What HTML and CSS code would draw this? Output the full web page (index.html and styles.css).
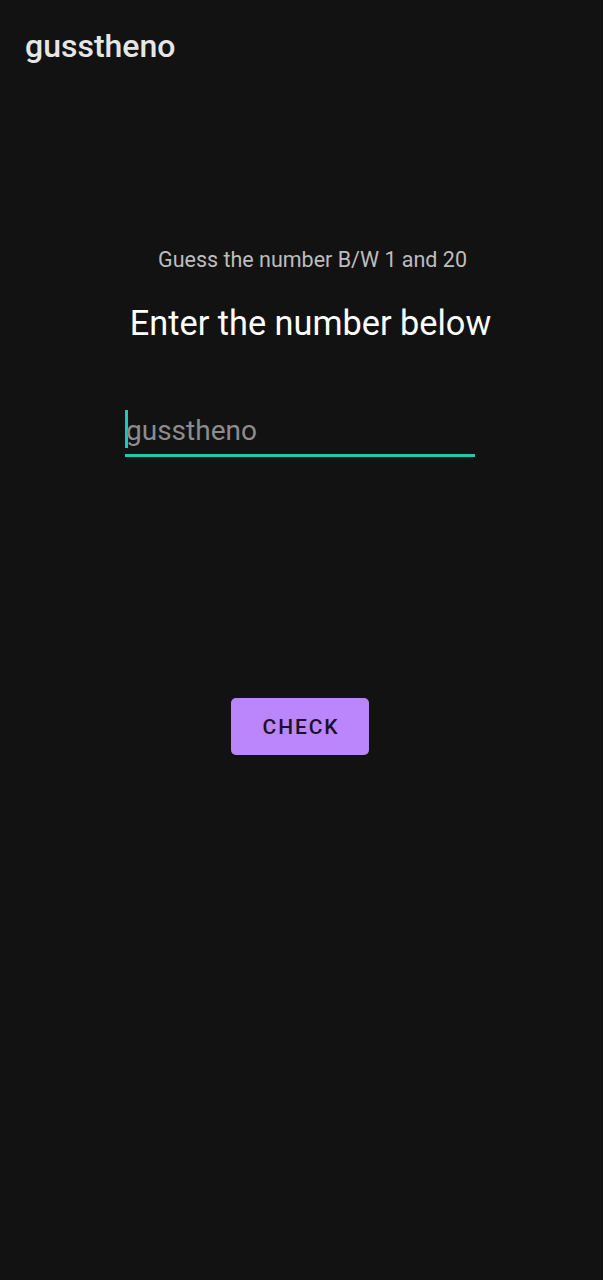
FILE: index.html
```html
<!DOCTYPE html>
<html lang="en">
<head>
<meta charset="utf-8">
<title>gusstheno</title>
<link rel="stylesheet" href="styles.css">
</head>
<body>
<div class="app">
  <header class="appbar"><span class="app-title">gusstheno</span></header>
  <main class="content">
    <p class="hint">Guess the number B/W 1 and 20</p>
    <h1 class="heading">Enter the number below</h1>
    <div class="field">
      <span class="cursor"></span><span class="placeholder">gusstheno</span>
    </div>
    <button class="check">CHECK</button>
  </main>
</div>
</body>
</html>
```
FILE: styles.css
```css
html, body {
  margin: 0;
  padding: 0;
  background: #121212;
}
body {
  font-family: Roboto, "Noto Sans", sans-serif;
  width: 603px;
  height: 1280px;
  overflow: hidden;
}
.app {
  display: flex;
  flex-direction: column;
}
.appbar {
  height: 92px;
  padding: 24px 0 0 25px;
  box-sizing: border-box;
}
.app-title {
  font-size: 32px;
  font-weight: 500;
  color: #e6e6e6;
  line-height: 44px;
  display: block;
}
.content {
  display: flex;
  flex-direction: column;
  align-items: center;
  padding-top: 155px;
}
.hint {
  margin: 0 0 0 22px;
  font-size: 21.5px;
  line-height: 26px;
  color: #bdbdbd;
}
.heading {
  margin: 30px 0 0 18px;
  font-size: 34.3px;
  font-weight: 400;
  line-height: 40px;
  color: #ffffff;
}
.field {
  margin: 66px 3px 0 0;
  width: 350px;
  height: 45px;
  border-bottom: 3px solid #1ec8b7;
  display: flex;
  align-items: flex-start;
  box-sizing: content-box;
}
.cursor {
  width: 3px;
  height: 38px;
  background: #1ec8b7;
  margin-top: 1px;
}
.placeholder {
  font-size: 28px;
  line-height: 44px;
  color: #8c8c8c;
  margin-left: -2px;
}
.check {
  margin: 241px 3px 0 0;
  width: 138px;
  height: 57px;
  border: none;
  border-radius: 5px;
  background: #bb86fc;
  color: #1a1226;
  font-family: Roboto, "Noto Sans", sans-serif;
  font-size: 21px;
  font-weight: 500;
  letter-spacing: 1.9px;
  padding: 0 0 0 2px;
}
```
